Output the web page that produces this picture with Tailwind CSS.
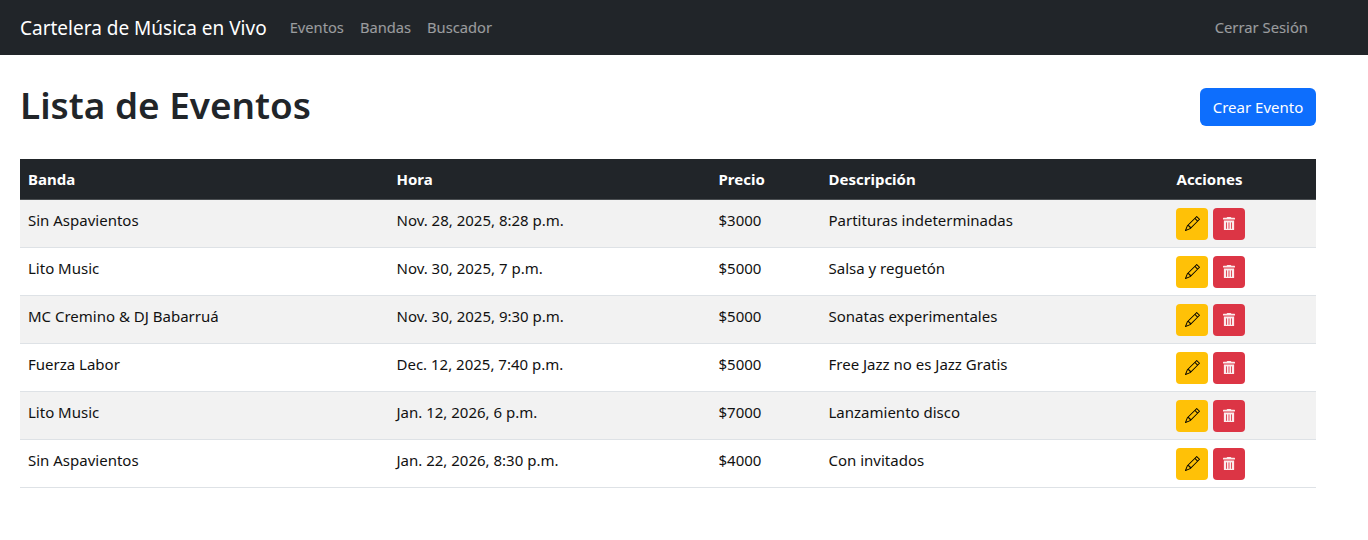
<!DOCTYPE html>
<html lang="es">
<head>
  <meta charset="UTF-8" />
  <title>Cartelera de Música en Vivo</title>
  <script src="https://cdn.jsdelivr.net/npm/@tailwindcss/browser@4"></script>
</head>
<body class="bg-white text-[#212529] font-['Noto_Sans',sans-serif] text-[15px]">

  <!-- Navbar -->
  <nav class="h-[55px] bg-[#212529] flex items-center pl-5 pr-[60px]">
    <a class="text-[19px] text-white mr-[15px] mt-px" href="#">Cartelera de Música en Vivo</a>
    <a class="text-white/55 text-[14.7px] px-2" href="#">Eventos</a>
    <a class="text-white/55 text-[14.7px] px-2" href="#">Bandas</a>
    <a class="text-white/55 text-[14.7px] px-2" href="#">Buscador</a>
    <a class="text-white/55 text-[14.8px] ml-auto" href="#">Cerrar Sesión</a>
  </nav>

  <main class="pl-5 pr-[52px]">
    <div class="flex items-center justify-between h-[104px] pt-[26px] pb-[26px]">
      <h1 class="text-[36.9px] leading-[48px] font-semibold -mt-1">Lista de Eventos</h1>
      <button class="h-[38px] w-[116px] rounded-md bg-[#0d6efd] text-white">Crear Evento</button>
    </div>

    <table class="w-full border-collapse table-fixed">
      <thead>
        <tr class="bg-[#212529] text-white font-bold text-left h-10 border-b border-[#4b4f52]">
          <th class="w-[368.5px] px-2">Banda</th>
          <th class="w-[322px] px-2">Hora</th>
          <th class="w-[110px] px-2">Precio</th>
          <th class="w-[348px] px-2">Descripción</th>
          <th class="px-2">Acciones</th>
        </tr>
      </thead>
      <tbody id="rows" class="text-[#111]"></tbody>
    </table>
  </main>

  <script>
    const eventos = [
      ["Sin Aspavientos", "Nov. 28, 2025, 8:28 p.m.", "$3000", "Partituras indeterminadas"],
      ["Lito Music", "Nov. 30, 2025, 7 p.m.", "$5000", "Salsa y reguetón"],
      ["MC Cremino & DJ Babarruá", "Nov. 30, 2025, 9:30 p.m.", "$5000", "Sonatas experimentales"],
      ["Fuerza Labor", "Dec. 12, 2025, 7:40 p.m.", "$5000", "Free Jazz no es Jazz Gratis"],
      ["Lito Music", "Jan. 12, 2026, 6 p.m.", "$7000", "Lanzamiento disco"],
      ["Sin Aspavientos", "Jan. 22, 2026, 8:30 p.m.", "$4000", "Con invitados"]
    ];

    const rows = document.getElementById("rows");
    eventos.forEach((e, i) => {
      const tr = document.createElement("tr");
      tr.className = i % 2 === 0 ? "border-b border-[#dee2e6] bg-[#f2f2f2]" : "border-b border-[#dee2e6] bg-white";
      const cells = e.map(t => `<td class="px-2 pt-2 pb-[15px] align-top leading-6"></td>`).join("");
      tr.innerHTML = cells + `
        <td class="pl-[7.5px] pr-2 pt-2 pb-[7px] align-top">
          <div class="flex gap-[5px]">
            <button class="w-8 h-8 rounded bg-[#ffc107] flex items-center justify-center">
              <svg class="w-[15px] h-[15px]" viewBox="0 0 16 16" fill="#000"><path d="M12.146.146a.5.5 0 0 1 .708 0l3 3a.5.5 0 0 1 0 .708l-10 10a.5.5 0 0 1-.168.11l-5 2a.5.5 0 0 1-.65-.65l2-5a.5.5 0 0 1 .11-.168l10-10zM11.207 2.5 13.5 4.793 14.793 3.5 12.5 1.207 11.207 2.5zm1.586 3L10.5 3.207 4 9.707V10h.5a.5.5 0 0 1 .5.5v.5h.5a.5.5 0 0 1 .5.5v.5h.293l6.5-6.5zm-9.761 5.175-.106.106-1.528 3.821 3.821-1.528.106-.106A.5.5 0 0 1 5 12.5V12h-.5a.5.5 0 0 1-.5-.5V11h-.5a.5.5 0 0 1-.468-.325z"/></svg>
            </button>
            <button class="w-8 h-8 rounded bg-[#dc3545] flex items-center justify-center">
              <svg class="w-[12px] h-[13.7px] opacity-90" viewBox="0 0 448 512" fill="#fff"><path d="M32 464a48 48 0 0 0 48 48h288a48 48 0 0 0 48-48V128H32zm272-256a16 16 0 0 1 32 0v224a16 16 0 0 1-32 0zm-96 0a16 16 0 0 1 32 0v224a16 16 0 0 1-32 0zm-96 0a16 16 0 0 1 32 0v224a16 16 0 0 1-32 0zM432 32H312l-9.4-18.7A24 24 0 0 0 281.1 0H166.8a23.72 23.72 0 0 0-21.4 13.3L136 32H16A16 16 0 0 0 0 48v32a16 16 0 0 0 16 16h416a16 16 0 0 0 16-16V48a16 16 0 0 0-16-16z"/></svg>
            </button>
          </div>
        </td>`;
      e.forEach((t, j) => { tr.children[j].textContent = t; });
      rows.appendChild(tr);
    });
  </script>
</body>
</html>
